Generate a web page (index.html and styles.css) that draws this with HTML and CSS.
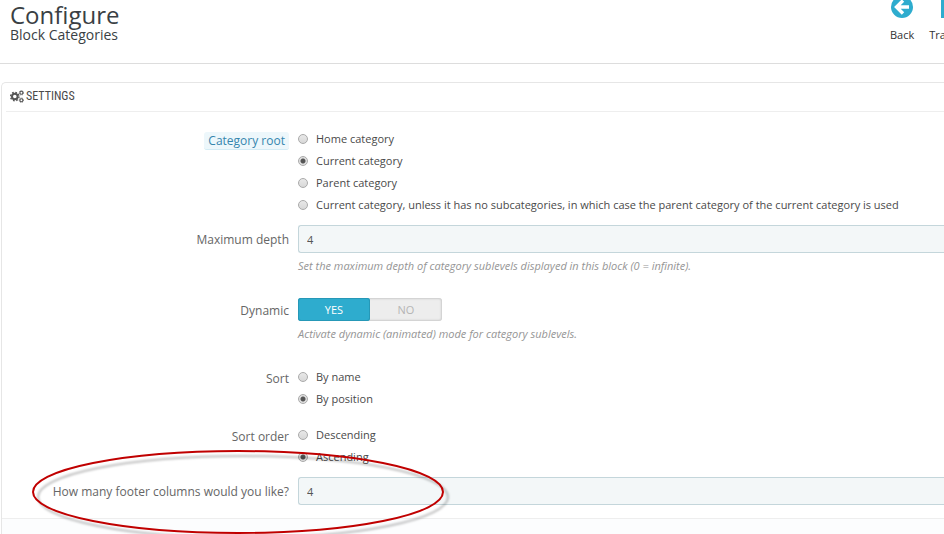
FILE: index.html
```
<!DOCTYPE html>
<html lang="en">
<head>
    <meta charset="UTF-8">
    <meta name="viewport" content="width=device-width, initial-scale=1.0">
    <title>Configure - Block Categories</title>
    <link rel="stylesheet" href="styles.css">
</head>
<body>
    <header class="page-head">
        <div class="page-title">
            <h1>Configure</h1>
            <h4>Block Categories</h4>
        </div>
        <nav class="toolbar">
            <a href="#" class="toolbar-btn">
                <svg class="icon" viewBox="0 0 22 22" width="22" height="22">
                    <circle cx="11" cy="11" r="11" fill="#2eacce"/>
                    <path d="M12 4.5 L5.5 11 L12 17.5 M6 11 H18" fill="none" stroke="#fff" stroke-width="3.4"/>
                </svg>
                <span>Back</span>
            </a>
            <a href="#" class="toolbar-btn">
                <svg class="icon" viewBox="0 0 26 22" width="26" height="22">
                    <path d="M1 1 H4 V22 H1 Z M6 4 C10 0 14 7 25 3 V14 C15 18 11 11 6 15 Z" fill="#2eacce"/>
                </svg>
                <span>Translate</span>
            </a>
        </nav>
    </header>

    <form class="panel">
        <h3 class="panel-heading">
            <svg class="cogs" viewBox="0 0 14 13" width="14" height="13">
                <circle cx="4.8" cy="6.5" r="2.8" fill="none" stroke="#555" stroke-width="2"/>
                <circle cx="4.8" cy="6.5" r="4.2" fill="none" stroke="#555" stroke-width="1.4" stroke-dasharray="1.7 1.6"/>
                <circle cx="11.4" cy="2.8" r="1.5" fill="none" stroke="#555" stroke-width="1.1"/>
                <circle cx="11.4" cy="2.8" r="2.2" fill="none" stroke="#555" stroke-width="0.8" stroke-dasharray="0.9 0.8"/>
                <circle cx="11.4" cy="10.2" r="1.5" fill="none" stroke="#555" stroke-width="1.1"/>
                <circle cx="11.4" cy="10.2" r="2.2" fill="none" stroke="#555" stroke-width="0.8" stroke-dasharray="0.9 0.8"/>
            </svg>
            SETTINGS
        </h3>

        <div class="form-wrapper">
            <div class="form-group" role="radiogroup" aria-labelledby="root-label">
                <div class="control-label" id="root-label"><span class="label-tooltip">Category root</span></div>
                <div class="field">
                    <label class="radio"><input type="radio" name="root">Home category</label>
                    <label class="radio"><input type="radio" name="root" checked>Current category</label>
                    <label class="radio"><input type="radio" name="root">Parent category</label>
                    <label class="radio"><input type="radio" name="root">Current category, unless it has no subcategories, in which case the parent category of the current category is used</label>
                </div>
            </div>

            <div class="form-group form-group-text">
                <label class="control-label" for="max-depth">Maximum depth</label>
                <div class="field">
                    <input type="text" class="form-control" id="max-depth" value="4">
                    <p class="help-block">Set the maximum depth of category sublevels displayed in this block (0 = infinite).</p>
                </div>
            </div>

            <div class="form-group" role="radiogroup" aria-labelledby="dynamic-label">
                <div class="control-label" id="dynamic-label">Dynamic</div>
                <div class="field">
                    <div class="switch">
                        <label class="switch-option"><input type="radio" name="dynamic" checked><span>YES</span></label>
                        <label class="switch-option"><input type="radio" name="dynamic"><span>NO</span></label>
                    </div>
                    <p class="help-block">Activate dynamic (animated) mode for category sublevels.</p>
                </div>
            </div>

            <div class="form-group form-group-sort" role="radiogroup" aria-labelledby="sort-label">
                <div class="control-label" id="sort-label">Sort</div>
                <div class="field">
                    <label class="radio"><input type="radio" name="sort">By name</label>
                    <label class="radio"><input type="radio" name="sort" checked>By position</label>
                </div>
            </div>

            <div class="form-group" role="radiogroup" aria-labelledby="order-label">
                <div class="control-label" id="order-label">Sort order</div>
                <div class="field">
                    <label class="radio"><input type="radio" name="order">Descending</label>
                    <label class="radio"><input type="radio" name="order" checked>Ascending</label>
                </div>
            </div>

            <div class="form-group form-group-text">
                <label class="control-label" for="columns">How many footer columns would you like?</label>
                <div class="field">
                    <input type="text" class="form-control" id="columns" value="4">
                </div>
                <!-- Red highlight around the footer columns field -->
                <svg class="highlight" viewBox="0 0 424 96" width="424" height="96">
                    <ellipse cx="207" cy="43" rx="205" ry="41"/>
                </svg>
            </div>
        </div>
        <div class="panel-footer"></div>
    </form>
</body>
</html>
```

FILE: styles.css
```
* {
    box-sizing: border-box;
}

body {
    margin: 0;
    background-color: #fff;
    color: #4a4a4a;
    font-family: "Open Sans", sans-serif;
    font-size: 11px;
    overflow: hidden;
}

/* Header */
.page-head {
    display: flex;
    justify-content: space-between;
    height: 64px;
    padding-left: 10px;
    border-bottom: 1px solid #ddd;
}

h1 {
    margin: 0;
    color: #3a3f44;
    font-size: 24px;
    font-weight: 400;
    line-height: 30px;
}

h4 {
    margin: 0;
    color: #3a3f44;
    font-size: 14px;
    font-weight: 400;
    line-height: 10px;
}

.toolbar {
    display: flex;
    gap: 15px;
    width: 54px;
}

.toolbar-btn {
    display: flex;
    flex-direction: column;
    align-items: center;
    color: #333;
    line-height: 16px;
    text-decoration: none;
}

.toolbar-btn .icon {
    flex: none;
    margin: -4px 0 9px;
}

/* Panel */
.panel {
    margin: 18px 0 0 1px;
    border: 1px solid #e6e6e6;
    border-right: none;
    border-radius: 5px 0 0 0;
}

.panel-heading {
    display: flex;
    align-items: center;
    gap: 2px;
    height: 29px;
    margin: 0 0 0 4px;
    padding: 0 0 2px 4px;
    border-bottom: 1px solid #eee;
    font-family: "Roboto Condensed", "Open Sans Condensed", "Open Sans", sans-serif;
    font-size: 12px;
    font-weight: 400;
}

.form-wrapper {
    padding-top: 16px;
}

.form-group {
    position: relative;
    display: flex;
    gap: 9px;
    margin-bottom: 9px;
}

.form-group-sort {
    margin-bottom: 14px;
}

.control-label {
    flex: 0 0 287px;
    color: #666;
    font-size: 12px;
    line-height: 26px;
    text-align: right;
}

.form-group-text .control-label {
    line-height: 30px;
}

.label-tooltip {
    padding: 0 4px;
    background-color: #edf7fb;
    border-bottom: 1px solid #d4ecf5;
    border-radius: 3px;
    color: #3586ae;
}

.field {
    flex: 1;
    min-width: 0;
}

.radio {
    display: flex;
    align-items: center;
    gap: 8px;
    line-height: 22px;
    white-space: nowrap;
}

.radio input {
    appearance: none;
    flex: none;
    width: 10px;
    height: 10px;
    margin: 0;
    border: 1px solid #aaa;
    border-radius: 50%;
    background: linear-gradient(#e8e8e8, #d8d8d8);
}

.radio input:checked {
    background: radial-gradient(circle, #555 2px, #e0e0e0 3px);
}

.form-control {
    display: block;
    width: 100%;
    height: 28px;
    padding: 0 8px;
    background-color: #f3f7f8;
    border: 1px solid #c4d6db;
    border-right: none;
    border-radius: 3px 0 0 3px;
    color: #555;
    font-family: inherit;
    font-size: 11px;
}

.help-block {
    margin: 4px 0 0;
    padding-bottom: 14px;
    color: #959595;
    font-size: 11px;
    font-style: italic;
    line-height: 18px;
}

/* Yes / no switch */
.switch {
    display: flex;
    width: 144px;
    height: 23px;
    background-color: #ededed;
    border-radius: 3px;
    box-shadow: inset 0 0 2px 1px #ccc;
}

.switch-option {
    flex: 1;
}

.switch-option input {
    position: absolute;
    opacity: 0;
}

.switch-option span {
    display: block;
    border-radius: 3px;
    color: #b5b5b5;
    font-size: 11px;
    line-height: 23px;
    text-align: center;
}

.switch-option input:checked + span {
    background-color: #2eacce;
    box-shadow: inset 0 0 0 1px #2698b7;
    color: #fff;
}

.highlight {
    position: absolute;
    top: -28px;
    left: 29px;
    overflow: visible;
    pointer-events: none;
}

.highlight ellipse {
    fill: none;
    stroke: #c00000;
    stroke-width: 2px;
    filter: drop-shadow(5px 5px 1px rgba(0, 0, 0, 0.25));
}

.panel-footer {
    height: 16px;
    margin-top: 11px;
    background-color: #fcfdfe;
    border-top: 1px solid #eee;
}
```
